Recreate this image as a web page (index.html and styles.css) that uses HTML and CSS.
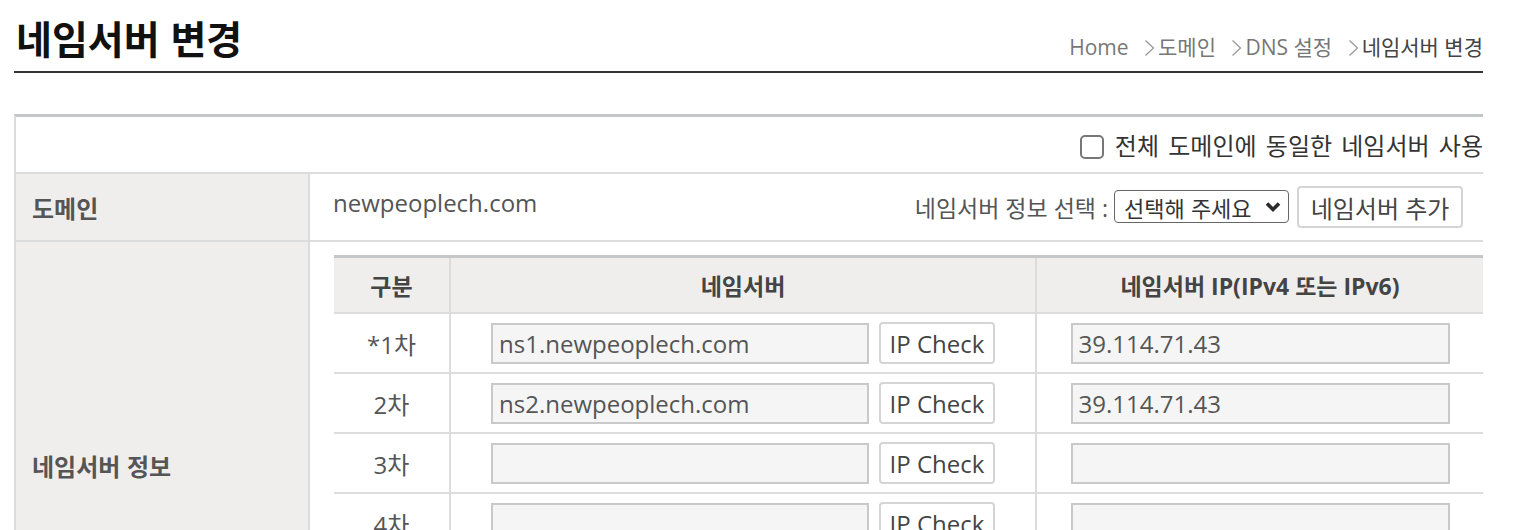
FILE: index.html
```html
<!DOCTYPE html>
<html lang="ko">
<head>
  <meta charset="UTF-8" />
  <meta name="viewport" content="width=device-width, initial-scale=1.0" />
  <title>네임서버 변경</title>
  <link rel="stylesheet" href="styles.css">
</head>
<body>
  <div class="wrap">
    <div class="page-head">
      <h2 class="page-title">네임서버 변경</h2>
      <div class="breadcrumb">
        <span>Home</span>
        <svg class="sep" width="11" height="18" viewBox="0 0 11 18"><polyline points="1.5,1.5 9.5,9 1.5,16.5" fill="none" stroke="#9a9a9a" stroke-width="1.3"/></svg><span>도메인</span>
        <svg class="sep" width="11" height="18" viewBox="0 0 11 18"><polyline points="1.5,1.5 9.5,9 1.5,16.5" fill="none" stroke="#9a9a9a" stroke-width="1.3"/></svg><span>DNS 설정</span>
        <svg class="sep" width="11" height="18" viewBox="0 0 11 18"><polyline points="1.5,1.5 9.5,9 1.5,16.5" fill="none" stroke="#9a9a9a" stroke-width="1.3"/></svg><span class="current">네임서버 변경</span>
      </div>
    </div>

    <table class="form-table">
      <tr class="opt-row">
        <td colspan="2">
          <label class="same-ns"><input type="checkbox" /> 전체 도메인에 동일한 네임서버 사용</label>
        </td>
      </tr>
      <tr class="domain-row">
        <th class="form-label">도메인</th>
        <td>
          <div class="domain-line">
            <span class="domain-name">newpeoplech.com</span>
            <div class="ns-pick">
              <span>네임서버 정보 선택 :</span>
              <span class="select-box">
                <select>
                  <option>선택해 주세요</option>
                </select>
                <svg class="select-arrow" width="18" height="13" viewBox="0 0 18 13"><polyline points="3,3.5 9,9.5 15,3.5" fill="none" stroke="#2b2b2b" stroke-width="3.6"/></svg>
              </span>
              <button class="btn">네임서버 추가</button>
            </div>
          </div>
        </td>
      </tr>
      <tr class="ns-row">
        <th class="form-label">네임서버 정보</th>
        <td>
          <table class="ns-table">
            <tr>
              <th class="c-no">구분</th>
              <th class="c-ns">네임서버</th>
              <th class="c-ip">네임서버 IP(IPv4 또는 IPv6)</th>
            </tr>
            <tr>
              <td class="c-no">*1차</td>
              <td class="c-ns"><input class="field ns-field" type="text" value="ns1.newpeoplech.com" /><button class="btn btn-check">IP Check</button></td>
              <td class="c-ip"><input class="field ip-field" type="text" value="39.114.71.43" /></td>
            </tr>
            <tr>
              <td class="c-no">2차</td>
              <td class="c-ns"><input class="field ns-field" type="text" value="ns2.newpeoplech.com" /><button class="btn btn-check">IP Check</button></td>
              <td class="c-ip"><input class="field ip-field" type="text" value="39.114.71.43" /></td>
            </tr>
            <tr>
              <td class="c-no">3차</td>
              <td class="c-ns"><input class="field ns-field" type="text" /><button class="btn btn-check">IP Check</button></td>
              <td class="c-ip"><input class="field ip-field" type="text" /></td>
            </tr>
            <tr>
              <td class="c-no">4차</td>
              <td class="c-ns"><input class="field ns-field" type="text" /><button class="btn btn-check">IP Check</button></td>
              <td class="c-ip"><input class="field ip-field" type="text" /></td>
            </tr>
            <tr>
              <td class="c-no">5차</td>
              <td class="c-ns"><input class="field ns-field" type="text" /><button class="btn btn-check">IP Check</button></td>
              <td class="c-ip"><input class="field ip-field" type="text" /></td>
            </tr>
            <tr>
              <td class="c-no">6차</td>
              <td class="c-ns"><input class="field ns-field" type="text" /><button class="btn btn-check">IP Check</button></td>
              <td class="c-ip"><input class="field ip-field" type="text" /></td>
            </tr>
          </table>
        </td>
      </tr>
    </table>
  </div>
</body>
</html>
```

FILE: styles.css
```css
* {
  box-sizing: border-box;
}
body {
  margin: 0;
  font-family: "Open Sans", "Noto Sans CJK KR", sans-serif;
  color: #555;
  background: #fff;
}
.wrap {
  padding: 0 33px 40px 14px;
}

/* page heading */
.page-head {
  display: flex;
  justify-content: space-between;
  align-items: flex-end;
  padding: 14px 0 11px;
  border-bottom: 2px solid #333;
}
.page-title {
  margin: 0;
  padding-left: 2px;
  font-family: "Noto Sans CJK KR", sans-serif;
  font-size: 39px;
  line-height: 46px;
  font-weight: 700;
  color: #111;
}
.breadcrumb {
  font-size: 21px;
  line-height: 26px;
  color: #777;
}
.breadcrumb .sep {
  margin: 0 3px 0 10px;
  vertical-align: -2px;
}
.breadcrumb .current {
  color: #444;
}

/* main form table */
.form-table {
  width: 100%;
  margin-top: 41px;
  border-spacing: 0;
  border-top: 3px solid #c4c6c8;
  border-left: 2px solid #dcdcdc;
}
.form-table > tbody > tr > th,
.form-table > tbody > tr > td {
  border-bottom: 2px solid #dcdcdc;
  padding: 0;
}
.form-label {
  width: 294px;
  padding: 0 16px !important;
  background: #efeeed;
  border-right: 2px solid #dcdcdc;
  text-align: left;
  font-family: "Noto Sans CJK KR", sans-serif;
  font-size: 24px;
  font-weight: 700;
  color: #555;
}
.opt-row td {
  height: 57px;
  text-align: right;
}
.same-ns {
  font-size: 24px;
  word-spacing: 3px;
  color: #333;
}
.same-ns input {
  appearance: none;
  width: 24px;
  height: 24px;
  margin: 0 2px 0 0;
  border: 2px solid #777;
  border-radius: 5px;
  vertical-align: -4px;
  background: #fff;
}
.domain-row td {
  height: 68px;
}
.domain-line {
  display: flex;
  justify-content: space-between;
  align-items: center;
  padding: 0 20px 0 23px;
}
.domain-name {
  font-size: 24px;
  color: #555;
  margin-bottom: 10px;
}
.ns-pick {
  display: flex;
  align-items: center;
  gap: 6px;
  font-size: 23px;
  color: #555;
}
.select-box {
  position: relative;
  display: inline-block;
}
.select-box select {
  appearance: none;
  width: 175px;
  height: 33px;
  padding: 0 30px 0 9px;
  border: 1.5px solid #666;
  border-radius: 4px;
  background: #fff;
  font-family: "Noto Sans CJK KR", sans-serif;
  font-size: 22px;
  color: #333;
}
.select-arrow {
  position: absolute;
  right: 7px;
  top: 10px;
}
.btn {
  height: 42px;
  padding: 0 12px;
  border: 2px solid #d5d5d5;
  border-radius: 4px;
  background: #fff;
  font-family: "Open Sans", "Noto Sans CJK KR", sans-serif;
  font-size: 24px;
  color: #444;
}
.ns-pick .btn {
  width: 166px;
  padding: 0;
  margin-left: 2px;
}
.ns-row > td {
  padding: 13px 0 14px 24px !important;
}

/* name server rows */
.ns-table {
  width: 100%;
  table-layout: fixed;
  border-spacing: 0;
  border-top: 3px solid #c4c6c8;
}
.ns-table th,
.ns-table td {
  padding: 0;
  text-align: center;
  border-bottom: 2px solid #dcdcdc;
}
.ns-table th {
  height: 56px;
  background: #efeeed;
  font-family: "Open Sans", "Noto Sans CJK KR", sans-serif;
  font-size: 23px;
  font-weight: 700;
  color: #444;
}
.ns-table td {
  height: 60px;
  font-size: 24px;
  color: #555;
}
.ns-table .c-no {
  width: 117px;
  border-right: 2px solid #dcdcdc;
}
.ns-table .c-ns {
  width: 586px;
  border-right: 2px solid #dcdcdc;
}
.field {
  height: 41px;
  padding: 0 6px;
  border: 2px solid #c9c9c9;
  background: #f5f5f5;
  font-family: "Open Sans", sans-serif;
  font-size: 24px;
  color: #555;
  vertical-align: middle;
}
.ns-field {
  width: 378px;
  margin-right: 10px;
}
.ip-field {
  width: 379px;
}
.btn-check {
  width: 116px;
  padding: 0;
  vertical-align: middle;
}
```
